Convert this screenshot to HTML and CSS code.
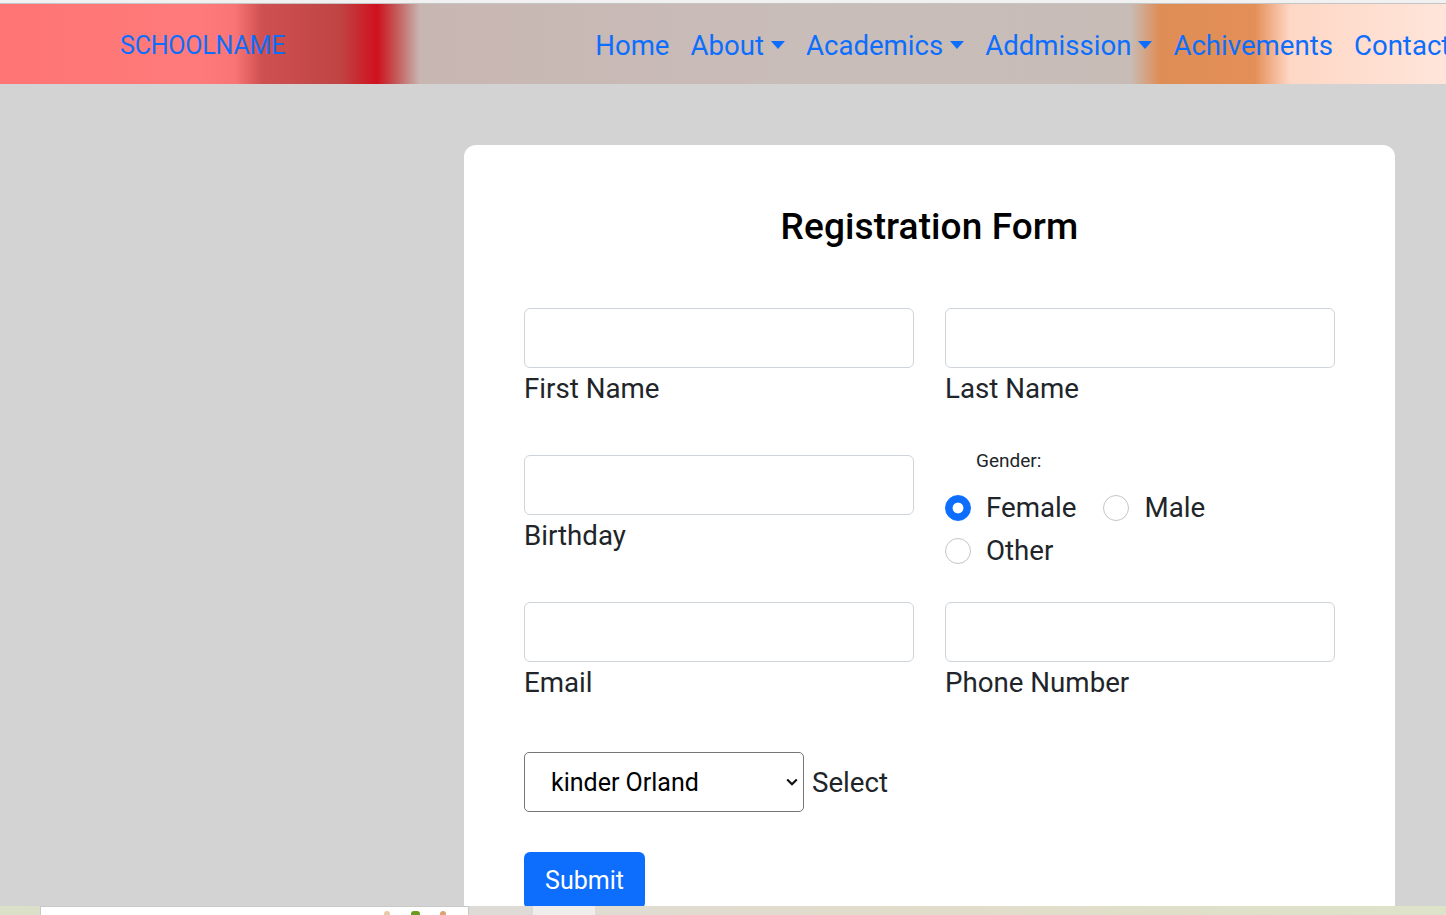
FILE: index.html
```html
<!DOCTYPE html>
<html lang="en">
<head>
<meta charset="utf-8">
<title>Registration Form</title>
<link rel="stylesheet" href="styles.css">
</head>
<body>
<div class="topline"></div>
<header class="navbar">
  <a class="brand" href="#">SCHOOLNAME</a>
  <nav class="nav">
    <a class="nav-link" href="#">Home</a>
    <a class="nav-link dropdown" href="#">About</a>
    <a class="nav-link dropdown" href="#">Academics</a>
    <a class="nav-link dropdown" href="#">Addmission</a>
    <a class="nav-link" href="#">Achivements</a>
    <a class="nav-link" href="#">Contact</a>
  </nav>
</header>
<main class="page">
  <form class="card">
    <h2 class="title">Registration Form</h2>
    <div class="grid">
      <div class="field">
        <input class="control" type="text" id="fname">
        <label class="label" for="fname">First Name</label>
      </div>
      <div class="field">
        <input class="control" type="text" id="lname">
        <label class="label" for="lname">Last Name</label>
      </div>
      <div class="field">
        <input class="control" type="text" id="bday">
        <label class="label" for="bday">Birthday</label>
      </div>
      <div class="field gender">
        <div class="gender-label">Gender:</div>
        <div class="radios">
          <label class="radio"><input type="radio" name="g" checked><span>Female</span></label>
          <label class="radio"><input type="radio" name="g"><span>Male</span></label>
          <label class="radio"><input type="radio" name="g"><span>Other</span></label>
        </div>
      </div>
      <div class="field">
        <input class="control" type="email" id="email">
        <label class="label" for="email">Email</label>
      </div>
      <div class="field">
        <input class="control" type="tel" id="phone">
        <label class="label" for="phone">Phone Number</label>
      </div>
    </div>
    <div class="select-row">
      <div class="select-wrap">
        <select class="select" id="grade">
          <option>kinder Orland</option>
          <option>Grade 1</option>
          <option>Grade 2</option>
        </select>
        <svg class="chevron" width="12" height="8" viewBox="0 0 12 8" aria-hidden="true"><path d="M1.2 1.5 L6 6.2 L10.8 1.5" fill="none" stroke="#111" stroke-width="2.2"/></svg>
      </div>
      <label class="select-label" for="grade">Select</label>
    </div>
    <button class="submit" type="submit">Submit</button>
  </form>
</main>
<div class="bottom-strip">
  <div class="strip-box"><span class="dot d1"></span><span class="dot d2"></span><span class="dot d3"></span></div>
  <div class="strip-gap"></div>
  <div class="strip-light"></div>
</div>
</body>
</html>
```
FILE: styles.css
```css
* { box-sizing: border-box; }
html, body { margin: 0; padding: 0; }
body {
  background: #d3d3d3;
  font-family: Roboto, "Liberation Sans", sans-serif;
  color: #212529;
  overflow: hidden;
}
.topline {
  height: 4px;
  background: #f1f1f1;
  border-bottom: 1px solid #c4c4c4;
}
.navbar {
  height: 80px;
  display: flex;
  align-items: center;
  padding-left: 120px;
  padding-top: 2px;
  white-space: nowrap;
  background: linear-gradient(to right,
    #ff7474 0px, #ff7b7b 200px, #f97575 235px, #cf5050 262px,
    #c04444 340px, #d0101e 377px, #c45454 395px, #c8b6b2 420px,
    #c9bdb9 800px, #c8bcb7 1130px, #de8d55 1160px, #e48f58 1255px,
    #fed7c5 1290px, #ffe5da 1446px);
}
.brand {
  font-size: 25px;
  color: #0d6efd;
  text-decoration: none;
  letter-spacing: -0.2px;
}
.nav {
  display: flex;
  margin-left: 310px;
  gap: 21px;
}
.nav-link {
  font-size: 27.6px;
  color: #0d6efd;
  text-decoration: none;
  display: flex;
  align-items: center;
}
.dropdown::after {
  content: "";
  display: inline-block;
  margin-left: 7px;
  border-top: 8px solid #0d6efd;
  border-left: 7.5px solid transparent;
  border-right: 7.5px solid transparent;
}
.page {
  padding: 61px 51px 0 464px;
}
.card {
  background: #fff;
  border-radius: 12px;
  padding: 54px 60px 40px 60px;
  min-height: 800px;
}
.title {
  margin: 0 0 53px;
  text-align: center;
  font-size: 37px;
  font-weight: 500;
  color: #000;
  line-height: 56px;
  letter-spacing: 0.1px;
}
.grid {
  display: grid;
  grid-template-columns: 390px 390px;
  column-gap: 31px;
  row-gap: 45px;
}
.field {
  display: flex;
  flex-direction: column;
}
.control {
  height: 60px;
  width: 100%;
  border: 1px solid #ced4da;
  border-radius: 6px;
  font: inherit;
  font-size: 24px;
  padding: 0 18px;
}
.label {
  font-size: 27.7px;
  line-height: 42px;
  color: #212529;
}
.gender {
  margin-top: -8px;
  height: 102px;
}
.gender-label {
  font-size: 19px;
  line-height: 27px;
  padding-left: 31px;
  color: #212529;
}
.radios {
  display: flex;
  flex-wrap: wrap;
  margin-top: 12px;
  width: 300px;
}
.radio {
  display: flex;
  align-items: center;
  height: 43px;
  font-size: 27.7px;
  margin-right: 27px;
}
.radio input {
  appearance: none;
  -webkit-appearance: none;
  width: 26px;
  height: 26px;
  margin: 0 15px 0 0;
  border: 1px solid #c5c5c5;
  border-radius: 50%;
  background: #fff;
}
.radio input:checked {
  border-color: #0d6efd;
  background: radial-gradient(circle, #fff 0 5px, #0d6efd 5.8px);
}
.select-row {
  display: flex;
  align-items: center;
  margin-top: 48px;
  gap: 8px;
}
.select-wrap {
  position: relative;
  width: 280px;
  height: 60px;
}
.select {
  appearance: none;
  -webkit-appearance: none;
  width: 100%;
  height: 100%;
  border: 1px solid #767676;
  border-radius: 5px;
  background: #fff;
  font-family: Roboto, "Liberation Sans", sans-serif;
  font-size: 25px;
  color: #000;
  padding-left: 26px;
}
.chevron {
  position: absolute;
  right: 6px;
  top: 26px;
  pointer-events: none;
}
.select-label {
  font-size: 27.7px;
  color: #212529;
}
.submit {
  margin-top: 40px;
  background: #0d6efd;
  color: #fff;
  border: none;
  border-radius: 6px;
  width: 121px;
  height: 57px;
  font-family: Roboto, "Liberation Sans", sans-serif;
  font-size: 25px;
  padding: 0;
}
.bottom-strip {
  position: fixed;
  left: 0;
  right: 0;
  bottom: 0;
  height: 9px;
  display: flex;
  background: linear-gradient(to right, #dbe0c8 0, #e0dcd4 500px, #e2dccb 900px, #dde3c8 1446px);
}
.strip-box {
  margin-left: 40px;
  width: 429px;
  background: #fff;
  border: 1px solid #c8c8c8;
  border-bottom: none;
  position: relative;
}
.strip-gap { width: 64px; background: #dedad6; }
.strip-light { width: 62px; background: #efeeec; }
.dot { position: absolute; top: 4px; width: 6px; height: 5px; border-radius: 3px 3px 0 0; }
.d1 { left: 343px; background: #e8c8a8; }
.d2 { left: 370px; width: 9px; background: #6a9a20; }
.d3 { left: 399px; background: #e0a070; }
```
